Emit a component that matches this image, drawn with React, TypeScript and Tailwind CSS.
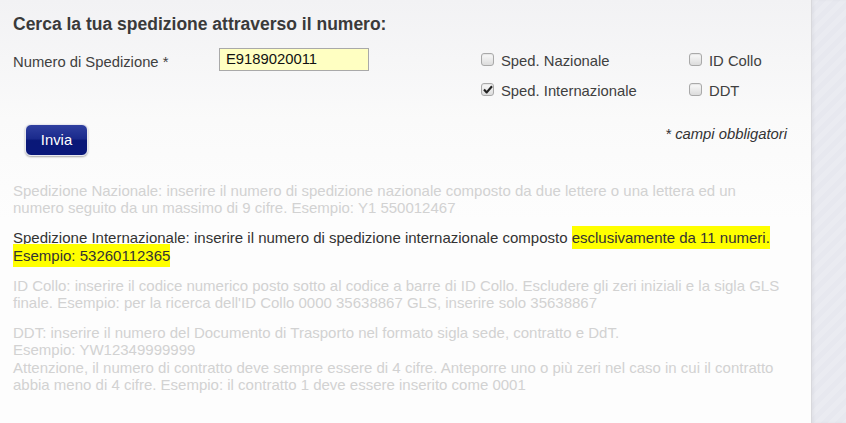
import { ReactNode } from 'react'

const font = { fontFamily: '"Liberation Sans", Arial, sans-serif' }

function Check({ checked = false, label }: { checked?: boolean; label: string }) {
  return (
    <div className="flex items-center h-[30px]">
      <span className="relative w-[13px] h-[13px] rounded-[3px] border border-[#a9a9a9] bg-[linear-gradient(#fafafa,#dcdcdc)] shadow-[inset_0_1px_1px_rgba(0,0,0,0.08)] mr-[7px] -mt-[4px] flex items-center justify-center">
        {checked && (
          <svg width="10" height="9" viewBox="0 0 10 9">
            <path d="M1 4.6 L3.7 7.4 L9 1.2" stroke="#222" strokeWidth="2.2" fill="none" strokeLinejoin="round" />
          </svg>
        )}
      </span>
      <span className="text-[14.8px] text-[#404040]">{label}</span>
    </div>
  )
}

function Hl({ children }: { children: ReactNode }) {
  return <span className="bg-[#ffff00] py-[3px]">{children}</span>
}

export default function App() {
  return (
    <div className="flex w-[846px] h-[423px] overflow-hidden" style={font}>
      {/* pannello principale */}
      <div className="w-[812px] h-full bg-[linear-gradient(#f2f2f4_0px,#fafafa_120px,#fdfdfd_220px)] border-r border-[#d8d8dc] pl-[13px] pt-[13px]">
        <h2 className="text-[17.5px] font-bold text-[#3a3a3a] leading-[22px]">
          Cerca la tua spedizione attraverso il numero:
        </h2>

        <div className="flex mt-[11px] h-[60px]">
          <div className="w-[206px] h-[30px] flex items-center text-[14.8px] text-[#404040] pt-[2px]">
            Numero di Spedizione *
          </div>
          <div className="pt-[2px]">
            <div className="w-[150px] h-[23px] border border-[#a9a9a9] bg-[#ffffc2] flex items-center pl-[6px] text-[14.8px] text-[#111]">
              E9189020011
            </div>
          </div>
          <div className="ml-[112px] grid grid-cols-[208px_auto]">
            <Check label="Sped. Nazionale" />
            <Check label="ID Collo" />
            <Check checked label="Sped. Internazionale" />
            <Check label="DDT" />
          </div>
        </div>

        <div className="flex items-start mt-[18px] w-[774px]">
          <button className="ml-[12px] w-[63px] h-[32px] rounded-[6px] border border-[#e8e8ef] bg-[linear-gradient(#3040a0_0%,#1a2a8c_45%,#0a1878_52%,#0a187a_100%)] text-white text-[14.8px] shadow-[0_1px_2px_rgba(0,0,0,0.35)]">
            Invia
          </button>
          <div className="ml-auto -mt-[1px] text-[14.8px] italic text-[#333]">* campi obbligatori</div>
        </div>

        <div className="w-[795px] mt-[26px] text-[15px] leading-[17.2px] flex flex-col gap-[13px] whitespace-nowrap">
          <p className="text-[#d2d2d2]">
            Spedizione Nazionale: inserire il numero di spedizione nazionale composto da due lettere o una lettera ed un
            <br />
            numero seguito da un massimo di 9 cifre. Esempio: Y1 550012467
          </p>
          <p className="text-[#333]">
            Spedizione Internazionale: inserire il numero di spedizione internazionale composto{' '}
            <Hl>esclusivamente da 11 numeri.</Hl>
            <br />
            <Hl>Esempio: 53260112365</Hl>
          </p>
          <p className="text-[#d2d2d2]">
            ID Collo: inserire il codice numerico posto sotto al codice a barre di ID Collo. Escludere gli zeri iniziali e la sigla GLS
            <br />
            finale. Esempio: per la ricerca dell'ID Collo 0000 35638867 GLS, inserire solo 35638867
          </p>
          <p className="text-[#d2d2d2]">
            DDT: inserire il numero del Documento di Trasporto nel formato sigla sede, contratto e DdT.
            <br />
            Esempio: YW12349999999
            <br />
            Attenzione, il numero di contratto deve sempre essere di 4 cifre. Anteporre uno o più zeri nel caso in cui il contratto
            <br />
            abbia meno di 4 cifre. Esempio: il contratto 1 deve essere inserito come 0001
          </p>
        </div>
      </div>

      {/* fascia laterale */}
      <div className="flex-1 h-full bg-[repeating-linear-gradient(135deg,#eaebf1_0px,#eaebf1_5px,#e7e8ef_5px,#e7e8ef_10px)] shadow-[inset_2px_0_3px_rgba(0,0,0,0.04)]" />
    </div>
  )
}
